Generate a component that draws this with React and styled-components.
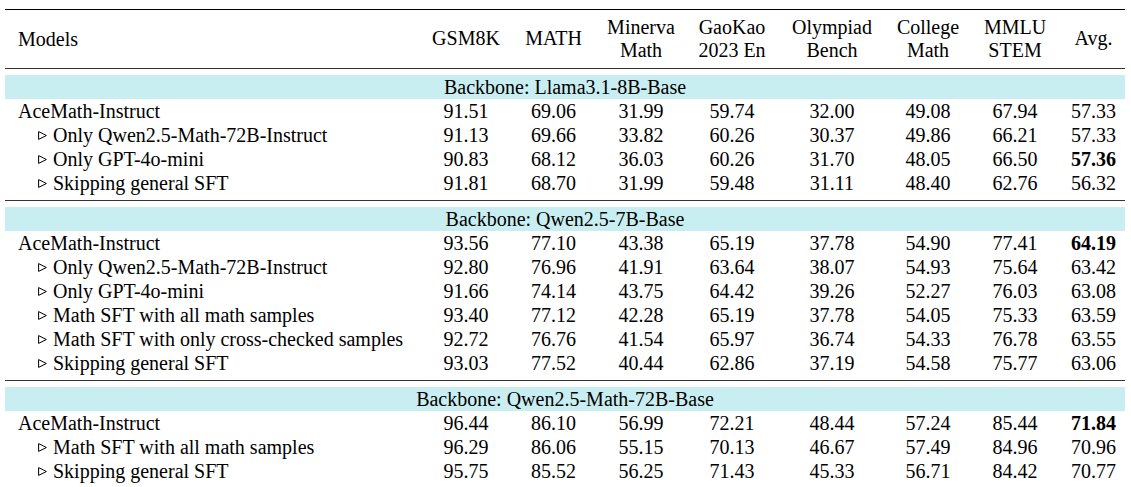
import styled, { createGlobalStyle } from "styled-components";

const COLUMNS = "414px 94px 81px 94px 88px 112px 80px 94px 63px";

const HEADERS = [
  ["GSM8K"],
  ["MATH"],
  ["Minerva", "Math"],
  ["GaoKao", "2023 En"],
  ["Olympiad", "Bench"],
  ["College", "Math"],
  ["MMLU", "STEM"],
  ["Avg."],
];

const GROUPS = [
  {
    backbone: "Llama3.1-8B-Base",
    rows: [
      { label: "AceMath-Instruct", values: ["91.51", "69.06", "31.99", "59.74", "32.00", "49.08", "67.94", "57.33"] },
      { label: "Only Qwen2.5-Math-72B-Instruct", sub: true, values: ["91.13", "69.66", "33.82", "60.26", "30.37", "49.86", "66.21", "57.33"] },
      { label: "Only GPT-4o-mini", sub: true, best: 7, values: ["90.83", "68.12", "36.03", "60.26", "31.70", "48.05", "66.50", "57.36"] },
      { label: "Skipping general SFT", sub: true, values: ["91.81", "68.70", "31.99", "59.48", "31.11", "48.40", "62.76", "56.32"] },
    ],
  },
  {
    backbone: "Qwen2.5-7B-Base",
    rows: [
      { label: "AceMath-Instruct", best: 7, values: ["93.56", "77.10", "43.38", "65.19", "37.78", "54.90", "77.41", "64.19"] },
      { label: "Only Qwen2.5-Math-72B-Instruct", sub: true, values: ["92.80", "76.96", "41.91", "63.64", "38.07", "54.93", "75.64", "63.42"] },
      { label: "Only GPT-4o-mini", sub: true, values: ["91.66", "74.14", "43.75", "64.42", "39.26", "52.27", "76.03", "63.08"] },
      { label: "Math SFT with all math samples", sub: true, values: ["93.40", "77.12", "42.28", "65.19", "37.78", "54.05", "75.33", "63.59"] },
      { label: "Math SFT with only cross-checked samples", sub: true, values: ["92.72", "76.76", "41.54", "65.97", "36.74", "54.33", "76.78", "63.55"] },
      { label: "Skipping general SFT", sub: true, values: ["93.03", "77.52", "40.44", "62.86", "37.19", "54.58", "75.77", "63.06"] },
    ],
  },
  {
    backbone: "Qwen2.5-Math-72B-Base",
    rows: [
      { label: "AceMath-Instruct", best: 7, values: ["96.44", "86.10", "56.99", "72.21", "48.44", "57.24", "85.44", "71.84"] },
      { label: "Math SFT with all math samples", sub: true, values: ["96.29", "86.06", "55.15", "70.13", "46.67", "57.49", "84.96", "70.96"] },
      { label: "Skipping general SFT", sub: true, values: ["95.75", "85.52", "56.25", "71.43", "45.33", "56.71", "84.42", "70.77"] },
    ],
  },
];

function Triangle() {
  return (
    <Marker width="9" height="9" viewBox="0 0 9 9">
      <path d="M0.6 0.6 L8.4 4.5 L0.6 8.4 Z" fill="none" stroke="#000" strokeWidth="1" />
    </Marker>
  );
}

function App() {
  return (
    <>
      <GlobalStyle />
      <Page>
        <HeaderRow>
          <LabelHead>Models</LabelHead>
          {HEADERS.map((lines) => (
            <HeadCell key={lines.join(" ")}>
              {lines.map((line) => (
                <span key={line}>{line}</span>
              ))}
            </HeadCell>
          ))}
        </HeaderRow>

        {GROUPS.map((group, i) => (
          <Section key={group.backbone} $rule={i < GROUPS.length - 1}>
            <Band>Backbone: {group.backbone}</Band>
            {group.rows.map((row) => (
              <Row key={row.label}>
                <Label $sub={row.sub}>
                  {row.sub && <Triangle />}
                  {row.label}
                </Label>
                {row.values.map((v, j) => (
                  <Value key={j} $bold={row.best === j}>
                    {v}
                  </Value>
                ))}
              </Row>
            ))}
          </Section>
        ))}
      </Page>
    </>
  );
}

export default App;

const GlobalStyle = createGlobalStyle`
  html, body {
    margin: 0;
    padding: 0;
    background: #fff;
  }

  body {
    font-family: "Liberation Serif", "Times New Roman", serif;
    color: #000;
  }
`;

const Page = styled.div`
  width: 1120px;
  padding: 9px 6px 0 5px;
  font-size: 20px;
`;

const HeaderRow = styled.div`
  display: grid;
  grid-template-columns: ${COLUMNS};
  align-items: center;
  height: 58px;
  border-top: 1.5px solid #000;
  border-bottom: 1px solid #333;
`;

const LabelHead = styled.div`
  padding-left: 13px;
  line-height: 24px;
`;

const HeadCell = styled.div`
  display: flex;
  flex-direction: column;
  align-items: center;
  line-height: 23.3px;
  white-space: nowrap;
`;

const Section = styled.div`
  margin-top: 5.5px;
  padding-bottom: ${(p) => (p.$rule ? "5.5px" : "0")};
  border-bottom: ${(p) => (p.$rule ? "1px solid #333" : "none")};
`;

const Band = styled.div`
  height: 24px;
  line-height: 24px;
  text-align: center;
  background: #c9eef2;
`;

const Row = styled.div`
  display: grid;
  grid-template-columns: ${COLUMNS};
  height: 24px;
  line-height: 24px;
`;

const Label = styled.div`
  padding-left: ${(p) => (p.$sub ? "33px" : "13px")};
  white-space: nowrap;
`;

const Marker = styled.svg`
  display: inline-block;
  margin-right: 6px;
  vertical-align: 1.5px;
`;

const Value = styled.div`
  text-align: center;
  font-weight: ${(p) => (p.$bold ? 700 : 400)};
`;
